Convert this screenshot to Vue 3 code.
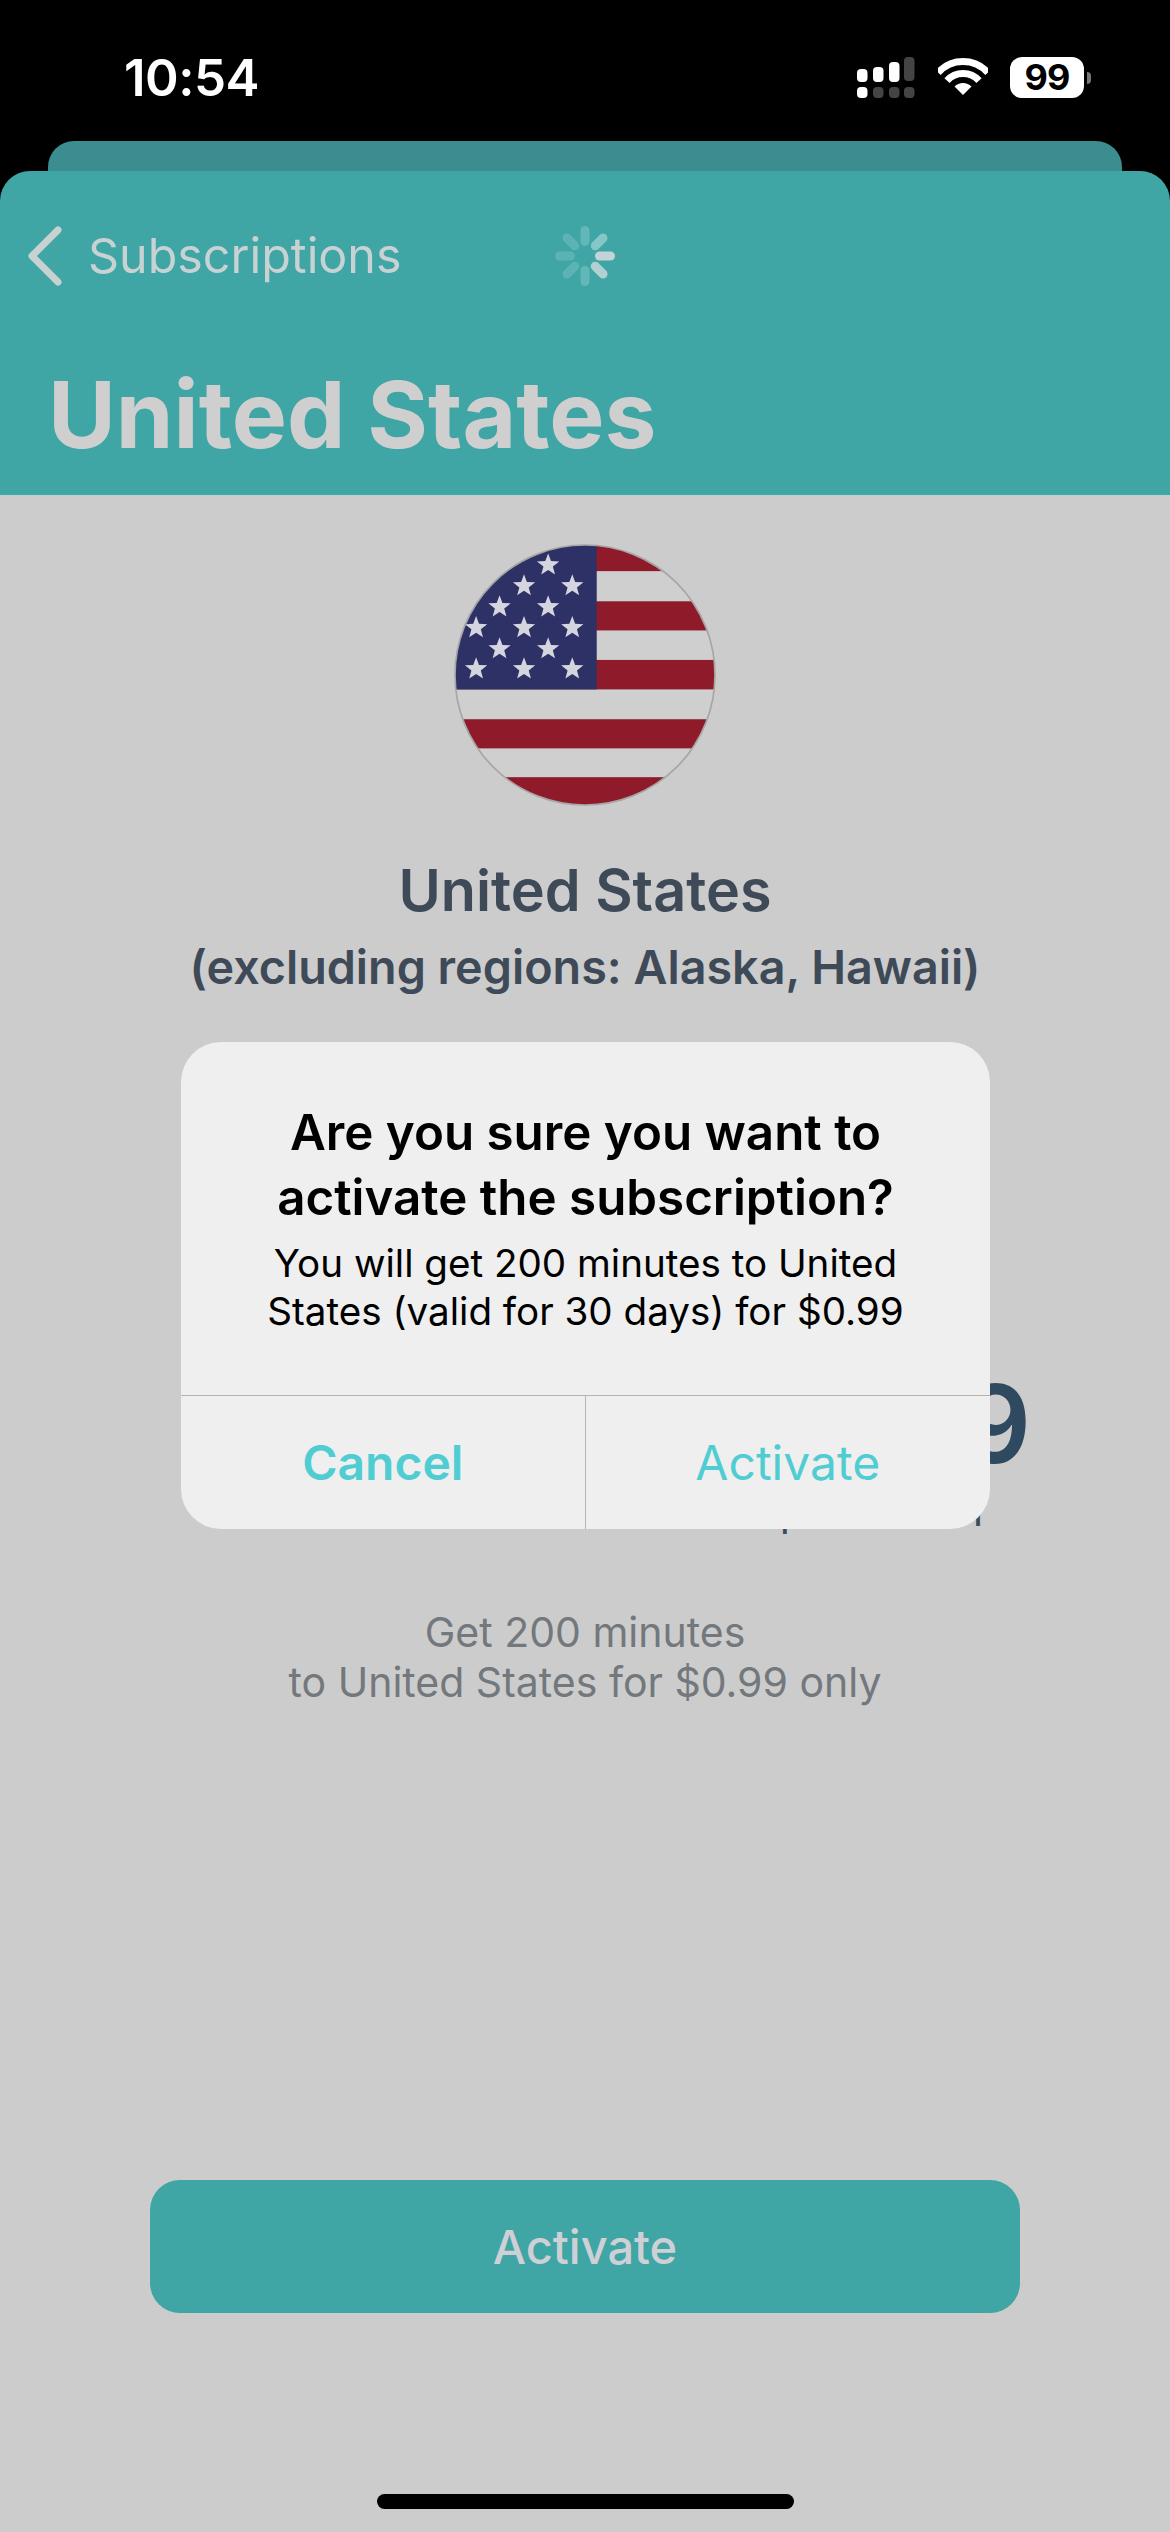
<script setup>
const makeStar = (cx, cy, r = 35) => {
  const pts = []
  for (let i = 0; i < 10; i++) {
    const rad = i % 2 ? r * 0.42 : r
    const a = -Math.PI / 2 + (i * Math.PI) / 5
    pts.push(`${(cx + rad * Math.cos(a)).toFixed(1)},${(cy + rad * Math.sin(a)).toFixed(1)}`)
  }
  return pts.join(' ')
}
const stars = [
  [385, 137], [313, 199], [457, 199], [240, 262], [385, 262],
  [170, 324], [313, 324], [457, 324], [240, 387], [385, 387],
  [170, 447], [313, 447], [457, 447]
].map(([x, y]) => makeStar(x, y))
const redStripes = [
  [75, 80], [245, 87], [420, 88], [597, 87], [770, 90]
]
const spokes = [
  { a: 0, c: '#62b8b8' }, { a: 45, c: '#86c6c6' }, { a: 90, c: '#c4d3d6' }, { a: 135, c: '#b2d0d2' },
  { a: 180, c: '#62b8b8' }, { a: 225, c: '#5cb3b3' }, { a: 270, c: '#5cb3b3' }, { a: 315, c: '#5cb3b3' }
]
const signalTop = [
  { x: 0, y: 12, h: 13, c: '#fff' }, { x: 16, y: 10, h: 15, c: '#fff' },
  { x: 32, y: 5, h: 20, c: '#fff' }, { x: 47, y: 0, h: 24, c: '#444' }
]
const signalBottom = [
  { x: 0, c: '#fff' }, { x: 16, c: '#444' }, { x: 32, c: '#444' }, { x: 47, c: '#444' }
]
</script>

<template>
  <div class="page">
    <div class="top">
      <div class="status">
        <span class="time">10:54</span>
        <div class="status-icons">
          <svg class="signal" width="58" height="42" viewBox="0 0 58 42">
            <rect v-for="b in signalTop" :key="b.x" :x="b.x" :y="b.y" width="10.5" :height="b.h" rx="4" :fill="b.c" />
            <rect v-for="b in signalBottom" :key="b.x" :x="b.x" y="30" width="10.5" height="11" rx="4" :fill="b.c" />
          </svg>
          <svg class="wifi" width="50" height="37" viewBox="0 0 50 37">
            <path d="M0.1 14.6A33.5 33.5 0 0 1 49.9 14.6" fill="none" stroke="#fff" stroke-width="7" />
            <path d="M9 22.6A21.5 21.5 0 0 1 41 22.6" fill="none" stroke="#fff" stroke-width="7" />
            <path d="M25 37L16.5 28.5A12 12 0 0 1 33.5 28.5Z" fill="#fff" />
          </svg>
          <div class="battery">
            <span class="battery-body">99</span>
            <span class="battery-nub"></span>
          </div>
        </div>
      </div>
      <div class="back-card"></div>
      <header class="header">
        <div class="nav">
          <div class="back">
            <svg width="36" height="60" viewBox="0 0 36 60">
              <path d="M31 4L5 30L31 56" fill="none" stroke="#c9d2d2" stroke-width="7" stroke-linecap="round" stroke-linejoin="round" />
            </svg>
            <span class="back-label">Subscriptions</span>
          </div>
          <svg class="spinner" width="64" height="64" viewBox="-32 -32 64 64">
            <rect v-for="s in spokes" :key="s.a" x="-4.5" y="-30" width="9" height="20" rx="4.5" :fill="s.c" :transform="`rotate(${s.a})`" />
          </svg>
          <span></span>
        </div>
        <h1 class="title">United States</h1>
      </header>
    </div>

    <main class="content">
      <svg class="flag" width="262" height="262" viewBox="104 74 782 782">
        <defs>
          <clipPath id="flag-clip"><circle cx="495" cy="465" r="388" /></clipPath>
        </defs>
        <g clip-path="url(#flag-clip)">
          <rect x="100" y="70" width="790" height="790" fill="#cfcfd0" />
          <rect v-for="r in redStripes" :key="r[0]" x="100" :y="r[0]" width="790" :height="r[1]" fill="#8f1a2a" />
          <rect x="100" y="70" width="430" height="438" fill="#2e3166" />
          <polygon v-for="(p, i) in stars" :key="i" :points="p" fill="#d4d5de" />
        </g>
        <circle cx="495" cy="465" r="388" fill="none" stroke="#a6a6a6" stroke-width="5" />
      </svg>
      <h2 class="country">United States</h2>
      <p class="regions">(excluding regions: Alaska, Hawaii)</p>
      <div class="price">
        <span class="amount">$0.99</span>
        <span class="period">per month</span>
      </div>
      <p class="desc">Get 200 minutes<br />to United States for $0.99 only</p>
      <button class="activate">Activate</button>
      <div class="home-indicator"></div>
    </main>

    <div class="dialog">
      <div class="dialog-text">
        <h3 class="dialog-title">Are you sure you want to activate the subscription?</h3>
        <p class="dialog-body">You will get 200 minutes to United States (valid for 30 days) for $0.99</p>
      </div>
      <div class="dialog-actions">
        <button class="dialog-btn cancel">Cancel</button>
        <button class="dialog-btn confirm">Activate</button>
      </div>
    </div>
  </div>
</template>

<style>
html, body { margin: 0; background: #ccc; }
</style>

<style scoped>
.page {
  position: relative;
  width: 1170px;
  height: 2532px;
  overflow: hidden;
  background: #cccccc;
  display: flex;
  flex-direction: column;
  font-family: Inter, "Liberation Sans", sans-serif;
}
.top { background: #000; }
.status {
  height: 141px;
  box-sizing: border-box;
  padding: 0 79px 0 124px;
  display: flex;
  justify-content: space-between;
  align-items: flex-start;
}
.time {
  margin-top: 47px;
  color: #fff;
  font-size: 51px;
  line-height: 62px;
  font-weight: 600;
  letter-spacing: -0.5px;
}
.status-icons {
  margin-top: 57px;
  display: flex;
  align-items: flex-start;
}
.signal { margin-right: 23px; }
.wifi { margin-top: 1px; margin-right: 22px; }
.battery { display: flex; align-items: center; }
.battery-body {
  width: 74px;
  height: 41px;
  border-radius: 12px;
  background: #fff;
  color: #000;
  font-size: 36px;
  font-weight: 700;
  line-height: 41px;
  text-align: center;
  letter-spacing: -1px;
}
.battery-nub {
  width: 4px;
  height: 12px;
  margin-left: 3px;
  border-radius: 0 4px 4px 0;
  background: #777;
}
.back-card {
  height: 30px;
  margin: 0 48px;
  border-radius: 26px 26px 0 0;
  background: #3b8d90;
}
.header {
  height: 324px;
  box-sizing: border-box;
  padding-top: 53px;
  border-radius: 30px 30px 0 0;
  background: #3fa5a5;
  border-bottom: 2px solid #37abaa;
}
.nav {
  display: grid;
  grid-template-columns: 1fr auto 1fr;
  align-items: center;
  height: 64px;
}
.back {
  display: flex;
  align-items: center;
  padding-left: 27px;
}
.back-label {
  margin-left: 25px;
  color: #c9d2d2;
  font-size: 48.4px;
  line-height: 60px;
}
.title {
  margin: 76px 0 0 48px;
  color: #cfcfcf;
  font-size: 92.7px;
  line-height: 100px;
  font-weight: 700;
}
.content {
  flex: 1;
  display: flex;
  flex-direction: column;
  align-items: center;
}
.flag { margin-top: 49px; }
.country {
  margin: 49px 0 0;
  color: #3e4a57;
  font-size: 57.5px;
  line-height: 70px;
  font-weight: 600;
}
.regions {
  margin: 12px 0 0;
  color: #3e4a57;
  font-size: 46.7px;
  line-height: 60px;
  font-weight: 600;
}
.price {
  align-self: flex-end;
  margin: 0 139px 0 0;
  height: 610px;
  box-sizing: border-box;
  padding-top: 367px;
  display: flex;
  flex-direction: column;
  align-items: flex-end;
  color: #3e4a57;
}
.amount {
  font-size: 108px;
  line-height: 120px;
  font-weight: 600;
  color: #2f4a60;
}
.period {
  margin-right: 48px;
  margin-top: 2px;
  font-size: 42px;
  line-height: 50px;
}
.desc {
  margin: 0;
  color: #73787c;
  font-size: 41px;
  line-height: 50px;
  text-align: center;
}
.activate {
  margin-top: 473px;
  width: 870px;
  height: 133px;
  border: 0;
  border-radius: 30px;
  background: #3fa5a5;
  color: #cfd0d5;
  font-family: inherit;
  font-size: 47px;
  font-weight: 500;
}
.home-indicator {
  margin-top: 181px;
  width: 417px;
  height: 15px;
  border-radius: 8px;
  background: #000;
}
.dialog {
  position: absolute;
  left: 181px;
  top: 1042px;
  width: 809px;
  height: 487px;
  border-radius: 40px;
  background: #efefef;
  display: flex;
  flex-direction: column;
  text-align: center;
  color: #000;
}
.dialog-text {
  height: 354px;
  box-sizing: border-box;
  padding: 58px 40px 0;
  border-bottom: 1px solid #b4b4b4;
}
.dialog-title {
  margin: 0;
  font-size: 49.3px;
  line-height: 65px;
  font-weight: 600;
}
.dialog-body {
  margin: 9px 0 0;
  font-size: 38.6px;
  line-height: 48px;
}
.dialog-actions {
  flex: 1;
  display: grid;
  grid-template-columns: 1fr 1fr;
}
.dialog-btn {
  border: 0;
  background: transparent;
  color: #4fcdd2;
  font-family: inherit;
  font-size: 48px;
}
.cancel {
  font-weight: 600;
  border-right: 1px solid #b4b4b4;
}
.confirm { font-weight: 400; }
</style>
